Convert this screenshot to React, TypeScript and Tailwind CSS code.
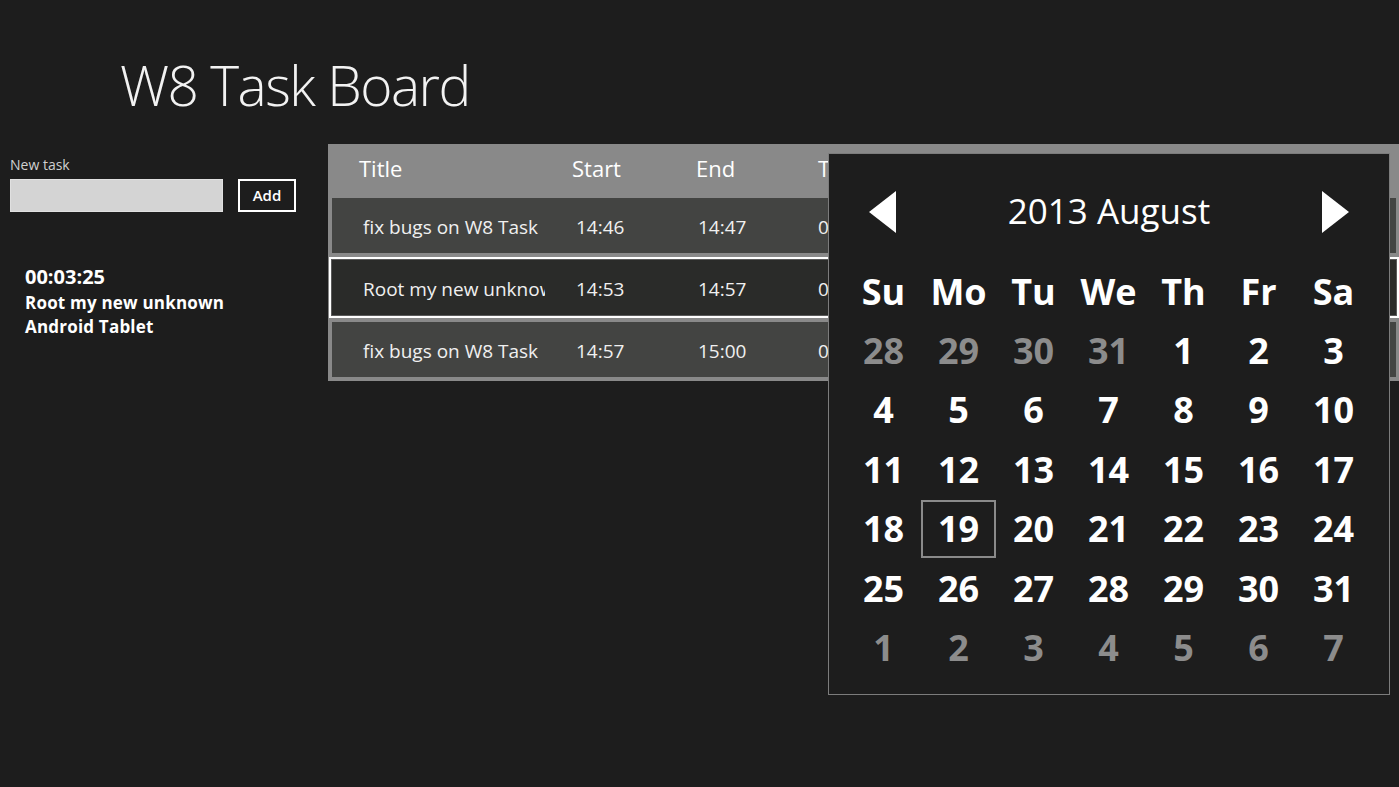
import React from "react";

const font = { fontFamily: '"Open Sans", "Noto Sans", sans-serif' };

const rows = [
  { title: "fix bugs on W8 Task", start: "14:46", end: "14:47", t: "0", selected: false },
  { title: "Root my new unknown Android Tablet", start: "14:53", end: "14:57", t: "0", selected: true },
  { title: "fix bugs on W8 Task", start: "14:57", end: "15:00", t: "0", selected: false },
];

const days = ["Su", "Mo", "Tu", "We", "Th", "Fr", "Sa"];

type Cell = { n: number; dim: boolean; sel?: boolean };
const cells: Cell[] = [];
[28, 29, 30, 31].forEach((n) => cells.push({ n, dim: true }));
for (let i = 1; i <= 31; i++) cells.push({ n: i, dim: false, sel: i === 19 });
for (let i = 1; i <= 7; i++) cells.push({ n: i, dim: true });

function Calendar() {
  return (
    <div className="absolute left-[828px] top-[153px] w-[562px] h-[542px] bg-[#1d1d1d] border border-[#7c7c7c] text-white">
      <div className="flex items-center justify-between h-[108px] px-[40px] pt-[8px]">
        <svg width="27" height="42" viewBox="0 0 27 42">
          <polygon points="27,0 27,42 0,21" fill="#ffffff" />
        </svg>
        <div className="text-[35px] leading-none pb-[4px]">2013 August</div>
        <svg width="27" height="42" viewBox="0 0 27 42">
          <polygon points="0,0 0,42 27,21" fill="#ffffff" />
        </svg>
      </div>
      <div className="grid grid-cols-[repeat(7,75px)] ml-[17px]">
        {days.map((d) => (
          <div key={d} className="h-[59px] flex items-center justify-center text-[36px] font-bold leading-none">
            {d}
          </div>
        ))}
        {cells.map((c, i) => (
          <div key={i} className="h-[59.5px] flex items-center justify-center">
            <div
              className={
                "w-[78px] h-[58px] flex items-center justify-center text-[36px] font-bold leading-none " +
                (c.sel ? "border-2 border-[#8a8a8a] " : "border-2 border-transparent ") +
                (c.dim ? "text-[#8c8c8c]" : "text-white")
              }
            >
              {c.n}
            </div>
          </div>
        ))}
      </div>
    </div>
  );
}

function Row({ r }: { r: (typeof rows)[number] }) {
  const inner = (
    <div className={"flex items-center h-[55px] pt-[4px] text-[19px] text-[#f0f0f0] " + (r.selected ? "bg-[#2a2b29]" : "bg-[#434442]")}>
      <div className="w-[213px] shrink-0 pl-[31px] overflow-hidden whitespace-nowrap">{r.title}</div>
      <div className="w-[153px] shrink-0 pl-[31px]">{r.start}</div>
      <div className="w-[120px] shrink-0">{r.end}</div>
      <div className="flex-1">{r.t}</div>
    </div>
  );
  if (r.selected) {
    return <div className="border-[2px] border-white ml-[1px] p-[1px] bg-[#5a5a5a]">{inner}</div>;
  }
  return <div className="ml-[4px] mr-[3px]">{inner}</div>;
}

export default function App() {
  return (
    <div style={font} className="relative w-[1399px] h-[787px] bg-[#1d1d1d] overflow-hidden text-white">
      <div className="h-[144px] pl-[120px] pt-[57px]">
        <h1 className="text-[55px] font-light leading-none text-[#f2f2f2] tracking-[-1.5px]">W8 Task Board</h1>
      </div>
      <div className="flex">
        <div className="w-[328px] shrink-0 pl-[10px] pt-[14px]">
          <div className="text-[14px] text-[#d0d0d0] leading-none">New task</div>
          <div className="flex items-center mt-[7px]">
            <div className="w-[213px] h-[33px] bg-[#d4d4d4] border border-[#e0e0e0]" />
            <div className="ml-[15px] w-[58px] h-[33px] border-2 border-white flex items-center justify-center text-[15px] font-semibold">
              Add
            </div>
          </div>
          <div className="pl-[15px] pt-[51px] font-bold">
            <div className="text-[20px] leading-[28px]">00:03:25</div>
            <div className="text-[17px] leading-[24px] tracking-[0.2px]">Root my new unknown</div>
            <div className="text-[17px] leading-[24px] tracking-[0.2px]">Android Tablet</div>
          </div>
        </div>
        <div className="flex-1 bg-[#898989] h-[237px] flex flex-col">
          <div className="h-[54px] flex items-start pt-[8px] text-[22px] text-white">
            <div className="w-[244px] pl-[31px]">Title</div>
            <div className="w-[124px]">Start</div>
            <div className="w-[122px]">End</div>
            <div className="flex-1">Tasks</div>
          </div>
          <div className="flex flex-col gap-[4px]">
            <Row r={rows[0]} />
            <Row r={rows[1]} />
            <Row r={rows[2]} />
          </div>
        </div>
      </div>
      <Calendar />
    </div>
  );
}
